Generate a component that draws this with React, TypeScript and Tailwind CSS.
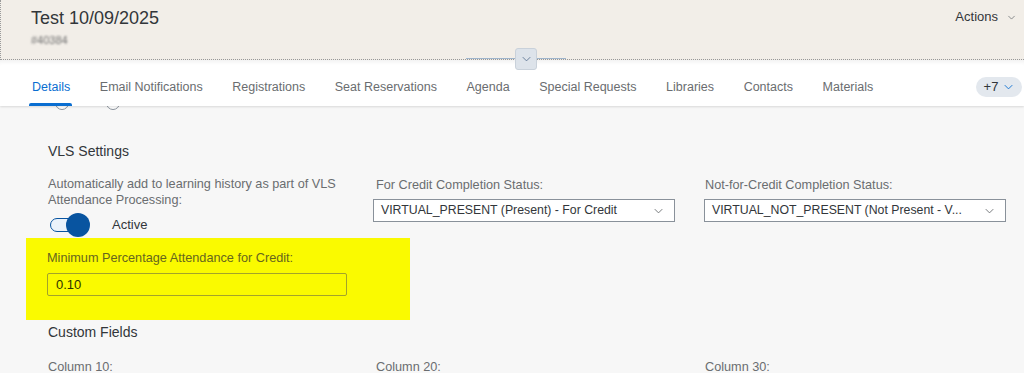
import React from "react";

const tabs = [
  "Details",
  "Email Notifications",
  "Registrations",
  "Seat Reservations",
  "Agenda",
  "Special Requests",
  "Libraries",
  "Contacts",
  "Materials",
];

const Chevron = ({ className }: { className?: string }) => (
  <svg viewBox="0 0 12 8" className={className} fill="none" stroke="currentColor" strokeWidth="1.2">
    <path d="M1 1.5l5 5 5-5" />
  </svg>
);

const Select = ({ value }: { value: string }) => (
  <div className="flex h-[23px] w-[302px] items-center justify-between border border-[#89919a] bg-white pl-[7px] pr-[10px]">
    <span className="whitespace-nowrap text-[12.3px] text-[#32363a]">{value}</span>
    <Chevron className="h-[6px] w-[11px] text-[#6a6d70]" />
  </div>
);

export default function App() {
  return (
    <div className="min-h-[373px] bg-[#f7f7f7] font-['Liberation_Sans',Arial,sans-serif]">
      {/* object header */}
      <div className="relative">
        <div className="flex h-[60px] items-start justify-between border-b border-l border-dotted border-[#9a9a9a] bg-[#f2eee8] pl-[30px] pr-[8px]">
          <div className="pt-[6px]">
            <div className="text-[18px] leading-[24px] text-[#32363a]">Test 10/09/2025</div>
            <div className="mt-[4px] text-[11px] leading-[13px] text-[#6f6f6f] blur-[1px]">#40384</div>
          </div>
          <div className="flex items-center gap-[9px] pt-[9px] text-[13px] leading-[16px] text-[#32363a]">
            Actions
            <Chevron className="h-[5px] w-[9px] text-[#6a6d70]" />
          </div>
        </div>
        {/* collapse handle */}
        <div className="absolute left-[466px] top-[58px] h-px w-[100px] bg-[#9fb5cc]" />
        <div className="absolute left-[515px] top-[48px] z-20 flex h-[22px] w-[22px] items-center justify-center rounded-[3px] border border-[#c9d1da] bg-[#dde3ea]">
          <Chevron className="h-[6px] w-[11px] text-[#5d7593]" />
        </div>
      </div>

      {/* tab bar */}
      <div className="relative z-10 flex h-[46px] items-center justify-between bg-white pl-[32px] pr-[2px] shadow-[0_1px_2px_rgba(0,0,0,0.12),inset_0_5px_4px_-3px_rgba(0,0,0,0.06)]">
        <div className="flex h-full gap-[29.6px]">
          {tabs.map((t, i) => (
            <div key={t} className="relative flex h-full items-center pt-[8px]">
              <span className={`text-[12.5px] ${i === 0 ? "text-[#0a6ed1]" : "text-[#6a6d70]"}`}>{t}</span>
              {i === 0 && (
                <div className="absolute bottom-0 left-[-3px] right-[-2px] h-[3px] rounded-t-[2px] bg-[#0a6ed1]" />
              )}
            </div>
          ))}
        </div>
        <div className="mt-[8px] flex h-[20px] w-[46px] items-center justify-center gap-[5px] rounded-full bg-[#e3e8ee] text-[13px] text-[#32363a]">
          +7
          <Chevron className="h-[6px] w-[11px] text-[#0a6ed1]" />
        </div>
      </div>

      {/* partially hidden radio buttons */}
      <div className="-mt-[10px] flex h-[14px] gap-[37px] pl-[55px]">
        <div className="h-[14px] w-[14px] rounded-full border border-[#89919a] bg-white" />
        <div className="h-[14px] w-[14px] rounded-full border border-[#89919a] bg-white" />
      </div>

      {/* VLS settings */}
      <div className="pl-[48px]">
        <div className="mt-[31px] text-[14px] leading-[20px] text-[#32363a]">VLS Settings</div>
        <div className="mt-[15px] grid grid-cols-[325px_331px_300px]">
          <div>
            <div className="text-[12.7px] leading-[16px] text-[#6a6d70]">
              Automatically add to learning history as part of VLS
              <br />
              Attendance Processing:
            </div>
            <div className="mt-[5px] flex items-center gap-[22px] pl-[2px]">
              <div className="relative h-[24px] w-[40px]">
                <div className="absolute left-0 right-[2px] top-[5px] h-[14px] rounded-full border border-[#0854a0] bg-[#eaf2fb]" />
                <div className="absolute right-0 top-0 h-[24px] w-[24px] rounded-full bg-[#0854a0]" />
              </div>
              <span className="text-[13px] text-[#32363a]">Active</span>
            </div>
          </div>
          <div>
            <div className="pl-[3px] pt-[1px] text-[12.7px] leading-[16px] text-[#6a6d70]">For Credit Completion Status:</div>
            <div className="mt-[6px]">
              <Select value="VIRTUAL_PRESENT (Present) - For Credit" />
            </div>
          </div>
          <div>
            <div className="pl-[1px] pt-[1px] text-[12.7px] leading-[16px] text-[#6a6d70]">Not-for-Credit Completion Status:</div>
            <div className="mt-[6px]">
              <Select value="VIRTUAL_NOT_PRESENT (Not Present - V..." />
            </div>
          </div>
        </div>

        {/* highlighted field */}
        <div className="-ml-[22px] mt-[1px] h-[82px] w-[384px] bg-[#fafa00] pl-[21px] pt-[12px]">
          <div className="text-[12.7px] leading-[16px] text-[#66661e]">Minimum Percentage Attendance for Credit:</div>
          <div className="mt-[7px] flex h-[23px] w-[300px] items-center rounded-[2px] border border-[#a3a32a] pl-[8px] text-[13px] text-[#2f3300]">
            0.10
          </div>
        </div>

        <div className="mt-[2px] text-[14px] leading-[20px] text-[#32363a]">Custom Fields</div>
        <div className="mt-[17px] grid grid-cols-[328px_329px_300px] text-[12.7px] leading-[16px] text-[#6a6d70]">
          <div>Column 10:</div>
          <div>Column 20:</div>
          <div>Column 30:</div>
        </div>
      </div>
    </div>
  );
}
